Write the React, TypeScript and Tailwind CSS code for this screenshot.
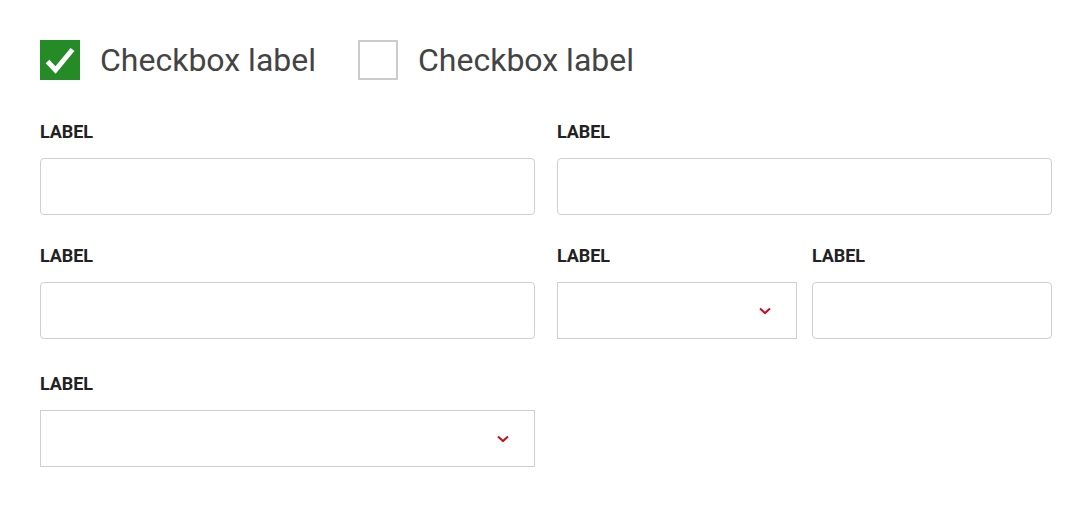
import React from "react";

const font = { fontFamily: "Roboto, 'Liberation Sans', sans-serif" };

function Chevron() {
  return (
    <svg width="12" height="7" viewBox="0 0 12 7" className="absolute right-[25px] top-1/2 -translate-y-1/2">
      <path d="M1 1l5 4.6L11 1" fill="none" stroke="#cc0a1e" strokeWidth="2" />
    </svg>
  );
}

function Label({ children }: { children: React.ReactNode }) {
  return (
    <div className="mt-px mb-[16px] h-5 text-[18px] leading-5 font-bold tracking-[-0.1px] text-[#222]">
      {children}
    </div>
  );
}

function TextInput() {
  return <div className="h-[57px] w-full rounded-[4px] border border-[#cfcfcf] bg-white" />;
}

function Select() {
  return (
    <div className="relative h-[57px] w-full border border-[#cfcfcf] bg-white">
      <Chevron />
    </div>
  );
}

function Checkbox({ checked, label }: { checked?: boolean; label: string }) {
  return (
    <div className="flex items-center">
      {checked ? (
        <div className="h-10 w-10 bg-[#258b27]">
          <svg width="40" height="40" viewBox="0 0 40 40">
            <path d="M7.5 21.5l8 8.5L32.5 9.5" fill="none" stroke="#fff" strokeWidth="5" />
          </svg>
        </div>
      ) : (
        <div className="h-10 w-10 border-2 border-[#cccccc] bg-white" />
      )}
      <span className="ml-5 text-[32px] leading-10 text-[#444]">{label}</span>
    </div>
  );
}

export default function App() {
  return (
    <div className="min-h-screen bg-white px-10 pt-10" style={font}>
      <div className="flex h-10 gap-[42px]">
        <Checkbox checked label="Checkbox label" />
        <Checkbox label="Checkbox label" />
      </div>

      <div className="mt-[41px] grid grid-cols-2 gap-x-[22px]">
        <div>
          <Label>LABEL</Label>
          <TextInput />
        </div>
        <div>
          <Label>LABEL</Label>
          <TextInput />
        </div>
      </div>

      <div className="mt-[30px] grid grid-cols-2 gap-x-[22px]">
        <div>
          <Label>LABEL</Label>
          <TextInput />
        </div>
        <div className="grid grid-cols-2 gap-x-[15px]">
          <div>
            <Label>LABEL</Label>
            <Select />
          </div>
          <div>
            <Label>LABEL</Label>
            <TextInput />
          </div>
        </div>
      </div>

      <div className="mt-[34px] grid grid-cols-2 gap-x-[22px]">
        <div>
          <Label>LABEL</Label>
          <Select />
        </div>
      </div>
    </div>
  );
}
